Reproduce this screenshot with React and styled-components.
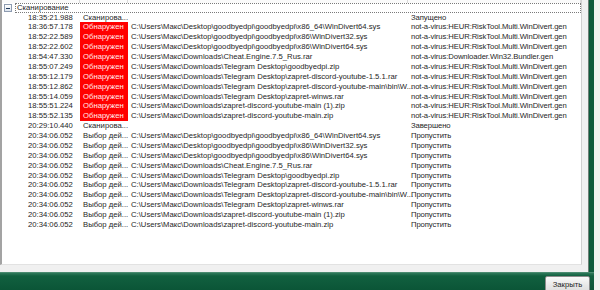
import React from "react";
import styled, { createGlobalStyle } from "styled-components";

const Global = createGlobalStyle`
  html, body { margin: 0; padding: 0; background: #eef2ef; }
  body { font-family: "Liberation Sans", Arial, sans-serif; }
`;

const Page = styled.div`
  width: 600px;
  height: 290px;
  overflow: hidden;
`;

const Window = styled.div`
  width: 594px;
  height: 290px;
  display: flex;
  flex-direction: column;
  background: #0d5a3b;
`;

const Body = styled.div`
  flex: 0 0 272px;
  display: flex;
  background: #f0f0f0;
  margin-right: 5px;
  padding: 0 6px 7px 0;
  box-sizing: border-box;
  border-right: 1px solid #6f7f76;
`;

const List = styled.div`
  flex: 1;
  background: #fff;
  border-left: 2px solid #a3a3a3;
  border-bottom: 1px solid #e2e2e2;
  border-right: 1px solid #d0d0d0;
  overflow: hidden;
  font-size: 7.7px;
  color: #262626;
`;

const Grid = styled.div`
  display: grid;
  grid-template-columns: 78px 48px 280px 1fr;
  height: ${(p) => p.$h}px;
  line-height: ${(p) => p.$h}px;
`;

const HeadCell = styled.div`
  border-right: 1px solid #d8d8d8;
  background: #fafafa;
`;

const GroupRow = styled.div`
  display: flex;
  align-items: center;
  height: 9.9px;
  padding-left: 2px;
`;

const Toggle = styled.div`
  width: 6px;
  height: 6px;
  border: 1px solid #8d9bb0;
  background: linear-gradient(#ffffff, #dde4ee);
  margin-right: 3px;
  margin-top: 1px;
  position: relative;
  &::after {
    content: "";
    position: absolute;
    left: 1px;
    right: 1px;
    top: 2.5px;
    height: 1px;
    background: #1f3a5c;
  }
`;

const GroupLabel = styled.div`
  flex: 1;
  height: 9.9px;
  box-sizing: border-box;
  border: 1px dotted #7a7a7a;
  padding-left: 1px;
  line-height: 8px;
  white-space: nowrap;
`;

const Cell = styled.div`
  white-space: nowrap;
  overflow: ${(p) => (p.$free ? "visible" : "hidden")};
  text-overflow: clip;
  padding: 0 3px;
  min-width: 0;
`;

const TimeCell = styled(Cell)`
  padding-left: 26px;
`;

const StatusCell = styled(Cell)`
  background: ${(p) => (p.$detected ? "#ff0000" : "transparent")};
  color: ${(p) => (p.$detected ? "#ffeaea" : "#262626")};
  padding-right: 0;
`;

const ResultCell = styled(Cell)`
  letter-spacing: -0.1px;
`;

const Footer = styled.div`
  flex: 1;
  display: flex;
  justify-content: flex-end;
  align-items: flex-start;
  padding: 4px 4px 0 0;
  overflow: hidden;
  background: linear-gradient(#5a957c 0, #2a7556 1.5px, #11603f 4px, #0b5537 100%);
`;

const CloseButton = styled.button`
  width: 45px;
  height: 20px;
  flex: none;
  margin: 0;
  padding: 0 0 4px;
  border: 1px solid #8c8c8c;
  border-radius: 2px;
  background: linear-gradient(#fafafa, #e6e6e6 50%, #d8d8d8);
  font-family: "Liberation Sans", Arial, sans-serif;
  font-size: 7.7px;
  color: #1e1e1e;
`;

const base = "C:\\Users\\Макс\\";
const paths = [
  base + "Desktop\\goodbyedpi\\goodbyedpi\\x86_64\\WinDivert64.sys",
  base + "Desktop\\goodbyedpi\\goodbyedpi\\x86\\WinDivert32.sys",
  base + "Desktop\\goodbyedpi\\goodbyedpi\\x86\\WinDivert64.sys",
  base + "Downloads\\Cheat.Engine.7.5_Rus.rar",
  base + "Downloads\\Telegram Desktop\\goodbyedpi.zip",
  base + "Downloads\\Telegram Desktop\\zapret-discord-youtube-1.5.1.rar",
  base + "Downloads\\Telegram Desktop\\zapret-discord-youtube-main\\bin\\W...",
  base + "Downloads\\Telegram Desktop\\zapret-winws.rar",
  base + "Downloads\\zapret-discord-youtube-main (1).zip",
  base + "Downloads\\zapret-discord-youtube-main.zip",
];
const heur = "not-a-virus:HEUR:RiskTool.Multi.WinDivert.gen";
const verdicts = [heur, heur, heur, "not-a-virus:Downloader.Win32.Bundler.gen", heur, heur, heur, heur, heur, heur];
const detTimes = [
  "18:36:57.178", "18:52:22.589", "18:52:22.602", "18:54:47.330", "18:55:07.249",
  "18:55:12.179", "18:55:12.862", "18:55:14.059", "18:55:51.224", "18:55:52.135",
];

const rows = [
  { time: "18:35:21.988", status: "Сканирова...", path: "", result: "Запущено" },
  ...detTimes.map((t, i) => ({ time: t, status: "Обнаружен", detected: true, path: paths[i], result: verdicts[i] })),
  { time: "20:29:10.440", status: "Сканирова...", path: "", result: "Завершено" },
  ...paths.map((p) => ({ time: "20:34:06.052", status: "Выбор дей...", path: p, result: "Пропустить" })),
];

const ROW_H = 9.88;

export default function App() {
  return (
    <Page>
      <Global />
      <Window>
        <Body>
          <List>
            <Grid $h={2.7}>
              <HeadCell />
              <HeadCell />
              <HeadCell />
              <HeadCell />
            </Grid>
            <GroupRow>
              <Toggle />
              <GroupLabel>Сканирование</GroupLabel>
            </GroupRow>
            {rows.map((r, i) => (
              <Grid key={i} $h={ROW_H}>
                <TimeCell>{r.time}</TimeCell>
                <StatusCell $detected={r.detected}>{r.status}</StatusCell>
                <Cell $free>{r.path}</Cell>
                <ResultCell>{r.result}</ResultCell>
              </Grid>
            ))}
          </List>
        </Body>
        <Footer>
          <CloseButton>Закрыть</CloseButton>
        </Footer>
      </Window>
    </Page>
  );
}
